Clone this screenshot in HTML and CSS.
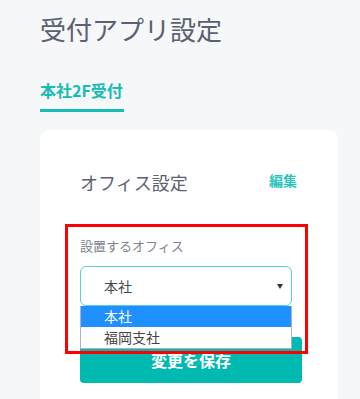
FILE: index.html
```html
<!DOCTYPE html>
<html lang="ja">
<head>
<meta charset="utf-8">
<title>受付アプリ設定</title>
<link rel="stylesheet" href="styles.css">
</head>
<body>
<div class="page">
  <h1 class="title">受付アプリ設定</h1>
  <div class="tabs">
    <span class="tab active">本社2F受付</span>
  </div>
  <section class="card">
    <div class="card-head">
      <h2 class="card-title">オフィス設定</h2>
      <a class="edit">編集</a>
    </div>
    <div class="field">
      <label class="field-label">設置するオフィス</label>
      <div class="select">
        <span class="select-value">本社</span>
        <span class="select-arrow"></span>
      </div>
      <ul class="options">
        <li class="option selected">本社</li>
        <li class="option">福岡支社</li>
      </ul>
    </div>
    <button class="save">変更を保存</button>
  </section>
</div>
</body>
</html>
```

FILE: styles.css
```css
html, body {
  margin: 0;
  padding: 0;
  background: #f5f7f8;
  font-family: "Noto Sans CJK JP", "Noto Sans", sans-serif;
}
.page {
  height: 399px;
  box-sizing: border-box;
  overflow: hidden;
  padding: 11px 22px 0 40px;
}
.title {
  margin: 0;
  font-size: 26px;
  line-height: 36px;
  font-weight: 400;
  color: #5b6072;
}
.tabs {
  margin-top: 32px;
  display: flex;
}
.tab {
  display: inline-block;
  font-size: 16px;
  line-height: 22px;
  font-weight: 700;
  color: #17bdb4;
  padding: 0 1px 8px 0;
  border-bottom: 3px solid #17bdb4;
}
.card {
  margin-top: 18px;
  background: #fff;
  border-radius: 10px;
  padding: 39px 40px 40px 40px;
  height: 320px;
  box-sizing: border-box;
}
.card-head {
  display: flex;
  justify-content: space-between;
  align-items: flex-start;
}
.card-title {
  margin: 0;
  font-size: 18px;
  line-height: 26px;
  font-weight: 400;
  color: #5b6072;
}
.edit {
  font-size: 14px;
  line-height: 20px;
  font-weight: 700;
  color: #2bc3bb;
  margin-top: 1px;
  margin-right: 1px;
}
.field {
  position: relative;
  margin-top: 42px;
  width: 212px;
}
.field::after {
  content: "";
  position: absolute;
  top: -13px;
  left: -15px;
  right: -16px;
  bottom: -48px;
  border: 3px solid #ff0000;
  z-index: 3;
}
.field-label {
  display: block;
  font-size: 13px;
  line-height: 18px;
  color: #7b8290;
}
.select {
  margin-top: 11px;
  height: 40px;
  box-sizing: border-box;
  border: 1px solid #5ad2cb;
  border-radius: 6px;
  display: flex;
  align-items: center;
  justify-content: space-between;
  padding: 0 8px 0 23px;
}
.select-value {
  font-size: 14px;
  color: #4a4a4a;
}
.select-arrow {
  width: 0;
  height: 0;
  border-left: 3px solid transparent;
  border-right: 3px solid transparent;
  border-top: 5px solid #333;
}
.options {
  position: absolute;
  left: 0;
  right: 0;
  top: 100%;
  margin: 0;
  padding: 0;
  list-style: none;
  background: #fff;
  border: 1px solid #a9b1cc;
  border-top: none;
  z-index: 2;
}
.option {
  height: 21px;
  line-height: 21px;
  padding-left: 23px;
  font-size: 14px;
  color: #444;
}
.option.selected {
  background: #1e90ff;
  color: #fff;
}
.save {
  display: block;
  margin-top: 31px;
  width: 222px;
  height: 46px;
  border: none;
  border-radius: 4px;
  background: #00b9b1;
  color: #fff;
  font-family: inherit;
  font-size: 16px;
  font-weight: 700;
  padding: 0;
}
```
